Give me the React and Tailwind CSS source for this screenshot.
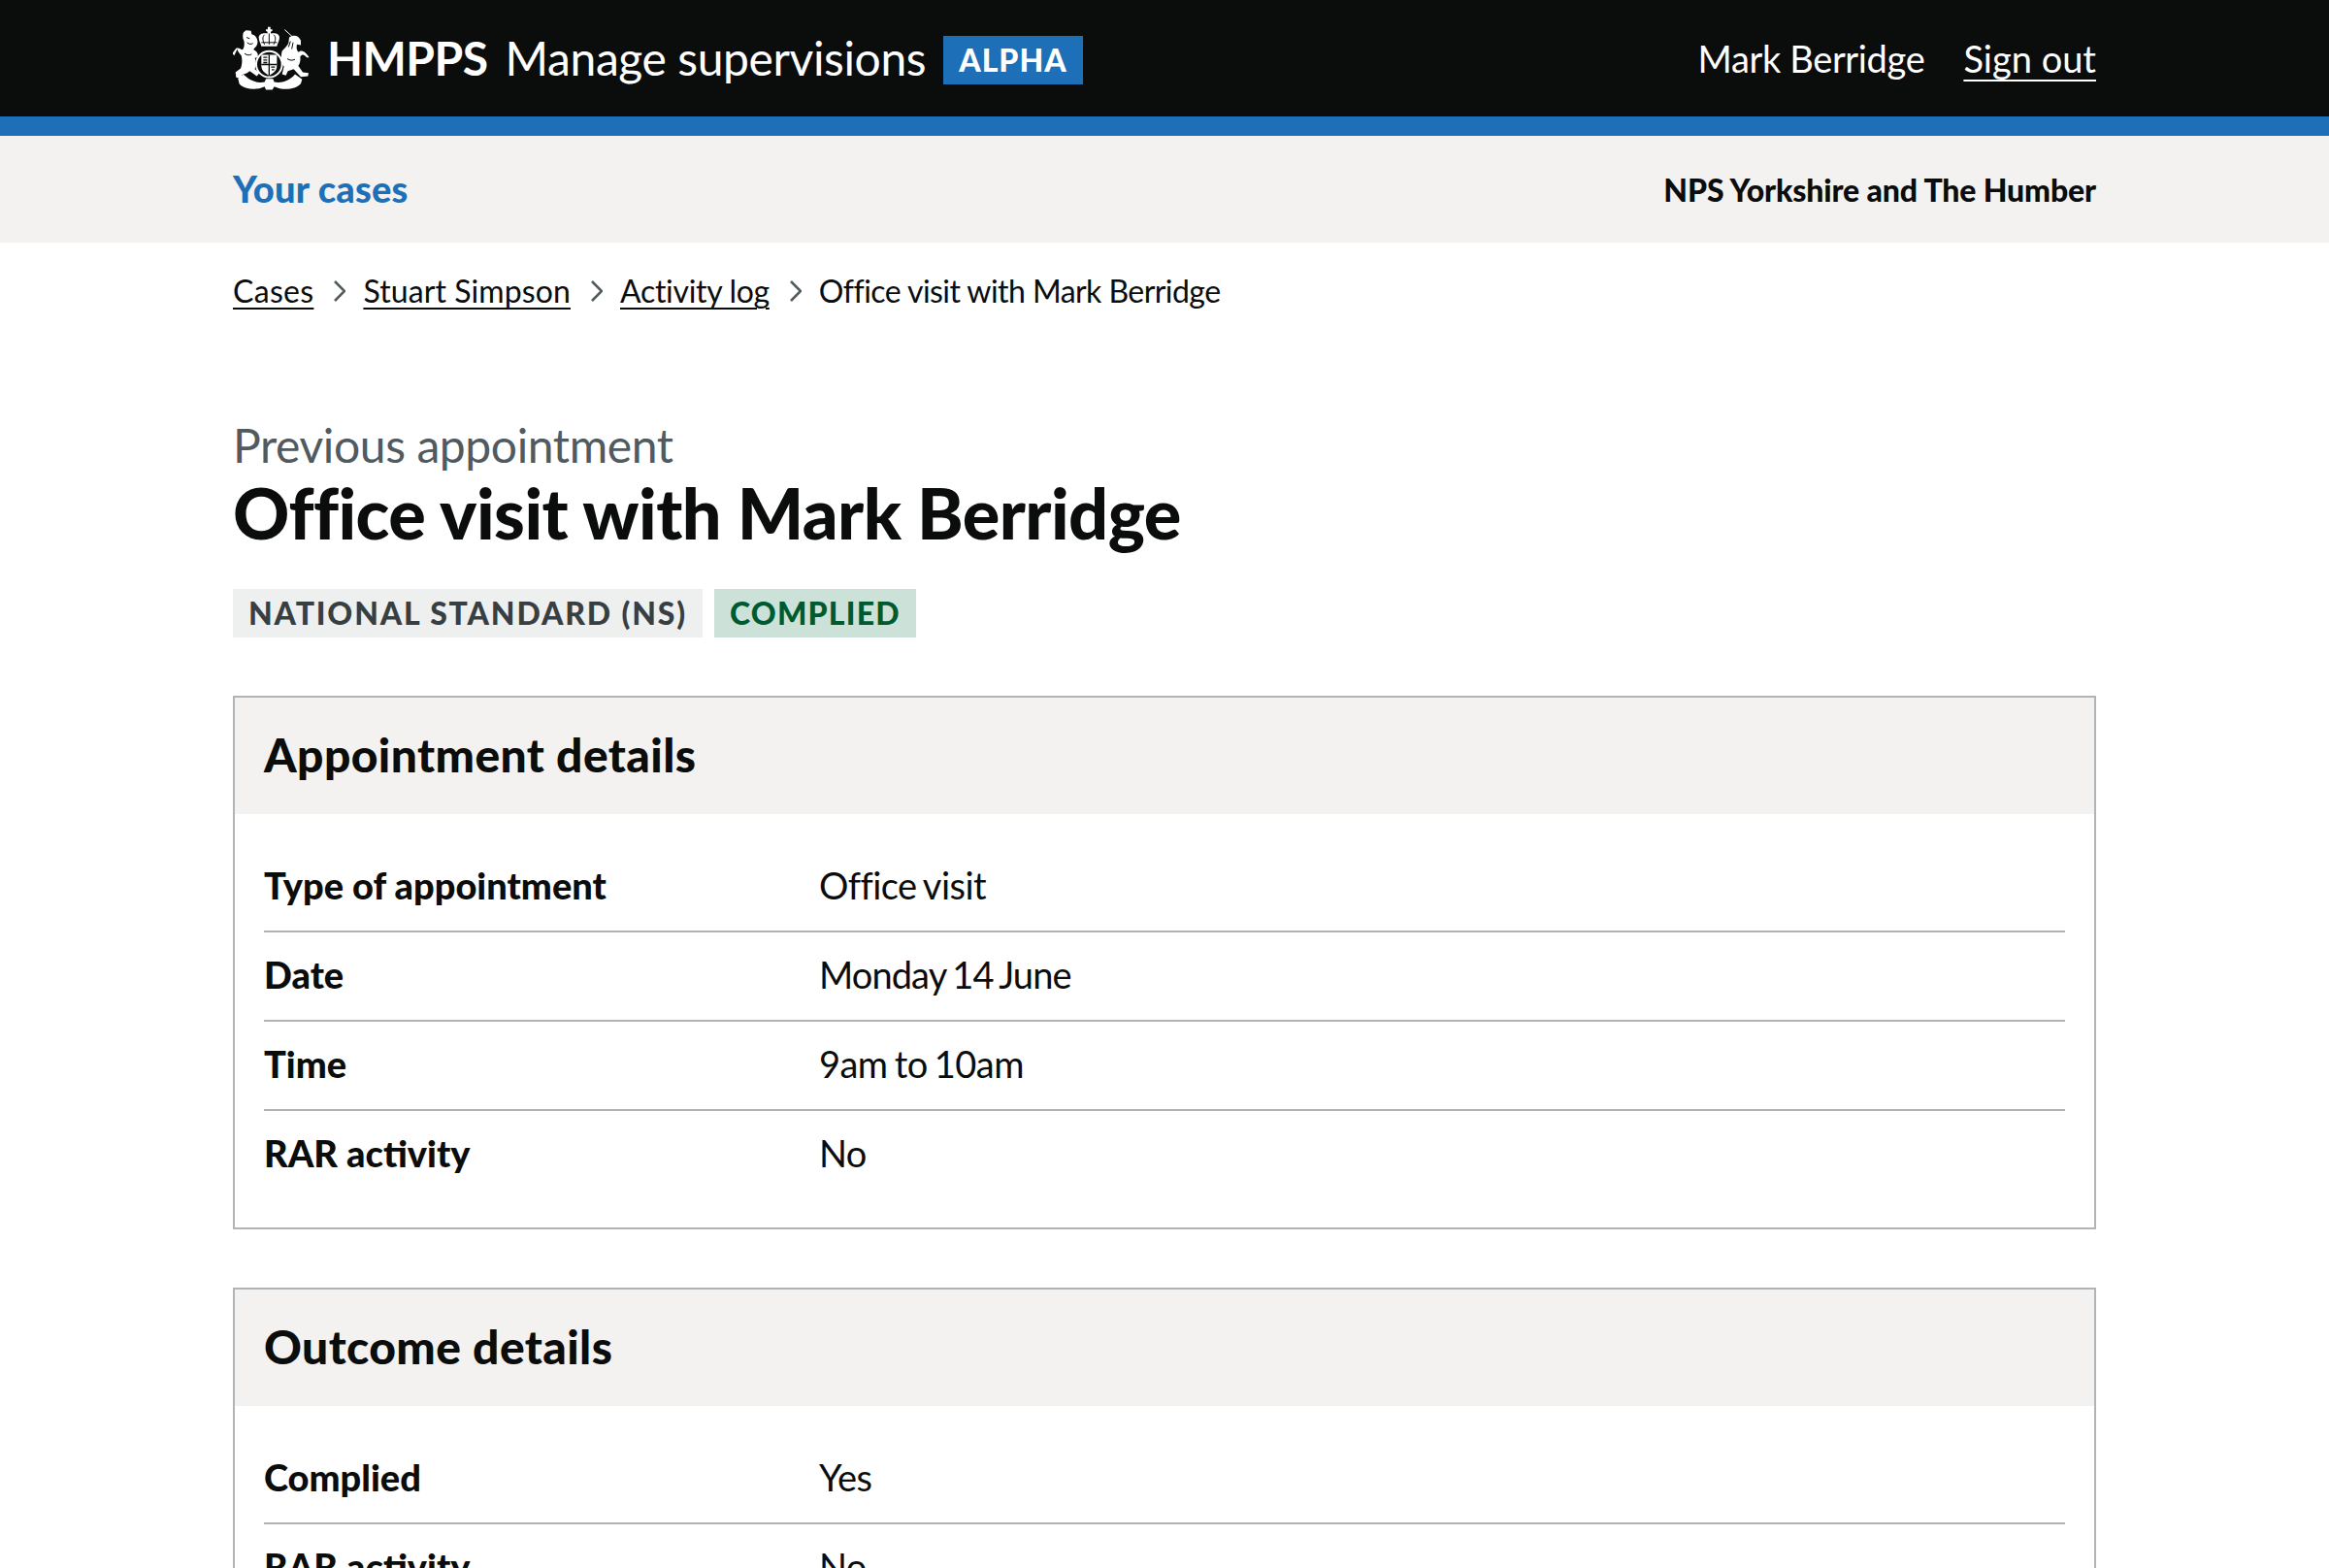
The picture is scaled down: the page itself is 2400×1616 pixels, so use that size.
const font = "font-['Lato','Noto_Sans',sans-serif]";

const Crest = () => (
  <svg viewBox="48 28 237 197" className="w-[79px] h-[66px] shrink-0" fill="white">
    {/* crown */}
    <path d="M128 62C128 50 145 47 155 50V45L150 42V37H156V30H164V37H170V42L165 45V50C178 47 192 50 192 62C192 72 186 80 184 90H136C134 80 128 72 128 62Z" />
    <path d="M146 54C138 60 140 72 146 84M174 54C182 60 180 72 174 84M160 50V84M136 78H184" fill="none" stroke="#0b0c0c" strokeWidth="3" />
    {/* garter ring and shield */}
    <circle cx="160" cy="145" r="40" fill="none" stroke="white" strokeWidth="6" />
    <path d="M136 116H184V150C184 166 172 174 160 180C148 174 136 166 136 150Z" />
    <path d="M160 116V180M136 146H184M142 124H154M142 132H154M142 140H154M166 154L178 154M168 162H176" fill="none" stroke="#0b0c0c" strokeWidth="4" />
    {/* lion */}
    <path d="M80 48L88 40L104 42L106 52C118 55 126 66 124 80C122 92 112 96 112 100C122 104 128 112 124 124L116 126C120 140 118 152 116 160L130 172L122 182L100 166L92 172L76 178L72 190L58 186L56 170L72 158C76 148 78 132 74 118C66 110 62 104 62 98L52 118L46 112L58 96C66 92 72 100 78 100C84 92 84 80 82 72C78 66 78 56 80 48Z" />
    <path d="M90 62L100 66M92 78C98 84 106 84 110 80M84 112C92 118 100 118 106 114" fill="none" stroke="#0b0c0c" strokeWidth="3" />
    {/* unicorn */}
    <path d="M208 38L234 62" fill="none" stroke="white" strokeWidth="3" />
    <path d="M222 62C238 52 252 58 258 72V86L246 84C244 92 244 100 250 108C258 100 270 102 284 124L276 124C268 114 262 114 256 122C258 134 254 146 250 150L264 170L282 172L280 182L258 184L236 160L218 166L212 180L200 176L206 152C196 140 196 120 200 104C208 96 216 88 220 80Z" />
    <path d="M226 74L220 92M234 78L230 98M216 128C224 134 232 134 240 130" fill="none" stroke="#0b0c0c" strokeWidth="3" />
    {/* motto ribbon */}
    <path d="M64 190L80 176C100 196 125 205 146 200L150 190H172L176 200C196 205 225 196 240 176L262 192L258 205C240 225 200 226 176 214L170 224H150L146 214C122 226 84 224 68 206Z" />
  </svg>
);

const Chevron = () => (
  <svg viewBox="0 0 12 22" className="w-[12px] h-[22px] ml-[21px] mr-[18px] shrink-0" fill="none" stroke="#505a5f" strokeWidth="2.6">
    <path d="M1 1L11 11L1 21" />
  </svg>
);

const Row = ({ label, value, last, valueClass = "tracking-[-0.55px]" }) => (
  <div className={last ? "flex h-[90px] pb-[3px] items-center" : "flex h-[92px] pb-[3px] items-center border-b-2 border-[#b1b4b6]"}>
    <div className="w-[572px] text-[38px] font-black tracking-[0px] text-[#0b0c0c]">{label}</div>
    <div className={"text-[38px] [word-spacing:-2px] text-[#0b0c0c] " + valueClass}>{value}</div>
  </div>
);

const Card = ({ title, children }) => (
  <section className="border-2 border-[#b1b4b6] mb-[60px]">
    <div className="h-[120px] pb-[3px] bg-[#f3f2f1] px-[30px] flex items-center">
      <h2 className="text-[48px] font-black tracking-[0.4px] text-[#0b0c0c]">{title}</h2>
    </div>
    <div className="px-[30px] py-[30px]">{children}</div>
  </section>
);

export default function App() {
  return (
    <div className={font + " h-[1616px] overflow-hidden bg-white"}>
      <header className="bg-[#0b0c0c] border-b-[20px] border-[#1d70b8]">
        <div className="w-[1920px] mx-auto h-[120px] flex items-center justify-between text-white">
          <div className="flex items-center">
            <Crest />
            <span className="ml-[18px] text-[48px] font-bold tracking-[-0.5px]">HMPPS</span>
            <span className="ml-[18px] text-[48px] tracking-[-0.4px]">Manage supervisions</span>
            <span className="ml-[18px] mt-[3px] h-[50px] px-[16px] bg-[#1d70b8] flex items-center text-[32px] font-black tracking-[1px]">ALPHA</span>
          </div>
          <div className="flex items-center text-[38px]">
            <span className="tracking-[-0.35px]">Mark Berridge</span>
            <a href="#" className="ml-[40px] underline underline-offset-[7px] decoration-2">Sign out</a>
          </div>
        </div>
      </header>

      <nav className="bg-[#f3f2f1] h-[110px]">
        <div className="w-[1920px] mx-auto h-full flex items-center justify-between">
          <a href="#" className="-mt-[2px] text-[38px] font-black tracking-[0.2px] text-[#1d70b8]">Your cases</a>
          <span className="mt-[2px] text-[32px] font-black tracking-[-0.14px] text-[#0b0c0c]">NPS Yorkshire and The Humber</span>
        </div>
      </nav>

      <main className="w-[1920px] mx-auto">
        <div className="flex items-center pt-[30px] h-[70px] text-[32px] text-[#0b0c0c]">
          <a href="#" className="tracking-[0.3px] underline underline-offset-[5px] decoration-2">Cases</a>
          <Chevron />
          <a href="#" className="tracking-[0.1px] underline underline-offset-[5px] decoration-2">Stuart Simpson</a>
          <Chevron />
          <a href="#" className="tracking-[-0.3px] underline underline-offset-[5px] decoration-2">Activity log</a>
          <Chevron />
          <span className="tracking-[-0.55px]">Office visit with Mark Berridge</span>
        </div>

        <div className="pt-[109px] text-[48px] leading-[60px] tracking-[-0.4px] text-[#505a5f]">Previous appointment</div>
        <h1 className="-mt-[1px] text-[72px] leading-[80px] font-black tracking-[-0.55px] text-[#0b0c0c]">Office visit with Mark Berridge</h1>

        <div className="flex mt-[39px] mb-[60px] gap-[12px]">
          <span className="h-[50px] px-[16px] flex items-center bg-[#eeefef] text-[#383f43] text-[32px] font-black tracking-[1.85px]">NATIONAL STANDARD (NS)</span>
          <span className="h-[50px] px-[16px] flex items-center bg-[#cce2d8] text-[#005a30] text-[32px] font-black tracking-[1.2px]">COMPLIED</span>
        </div>

        <Card title="Appointment details">
          <Row label="Type of appointment" value="Office visit" />
          <Row label="Date" value="Monday 14 June" valueClass="tracking-[-0.9px]" />
          <Row label="Time" value="9am to 10am" />
          <Row label="RAR activity" value="No" last />
        </Card>

        <Card title="Outcome details">
          <Row label="Complied" value="Yes" />
          <Row label="RAR activity" value="No" />
        </Card>
      </main>
    </div>
  );
}
